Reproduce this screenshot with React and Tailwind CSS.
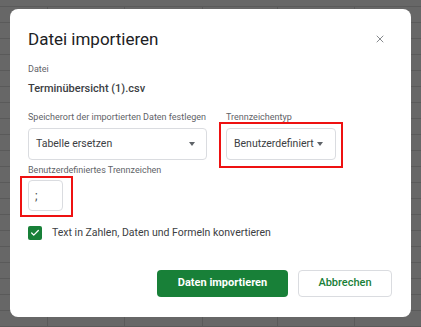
import { Check, X } from "lucide-react";

const cols = [48, 77, 78, 75, 77, 77];

function SheetBackdrop() {
    const rows = Array.from({ length: 21 });
    return (
        <div className="flex flex-col w-full h-full">
            <div className="h-[7px] border-b border-[#5a5a5a] shrink-0" />
            {rows.map((_, i) => (
                <div key={i} className="flex h-[16px] shrink-0 border-b border-[#5a5a5a]">
                    {cols.map((w, j) => (
                        <div key={j} style={{ width: w }} className="shrink-0 border-r border-[#5a5a5a]" />
                    ))}
                </div>
            ))}
        </div>
    );
}

function Select({ label, className }) {
    return (
        <div className={"h-[32px] flex items-center border border-[#dadce0] rounded-[4px] pl-[7px] pr-[11px] " + className}>
            <span className="flex-1 whitespace-nowrap text-[10.5px] text-[#3c4043]">{label}</span>
            <span className="w-0 h-0 border-l-[3.5px] border-r-[3.5px] border-t-[4px] border-l-transparent border-r-transparent border-t-[#5f6368]" />
        </div>
    );
}

export default function App() {
    return (
        <div className="relative w-[421px] h-[327px] overflow-hidden bg-[#676767] font-['Roboto',sans-serif]">
            <SheetBackdrop />

            <div className="absolute left-[10px] top-[9px] w-[401px] h-[308px] bg-white rounded-[8px] pt-[18px] pl-[18px] pr-[19px]">
                <div className="flex items-center justify-between h-[24px]">
                    <h1 className="text-[17px] text-[#202124] leading-[24px]">Datei importieren</h1>
                    <X className="w-[12px] h-[12px] text-[#5f6368] mr-[6px]" strokeWidth={1.5} />
                </div>

                <p className="mt-[12px] text-[9px] text-[#5f6368] leading-[12px]">Datei</p>
                <p className="mt-[7px] text-[11px] font-medium text-[#3c4043] leading-[14px]">Terminübersicht (1).csv</p>

                <div className="mt-[15px] flex gap-[19px]">
                    <div className="w-[179px]">
                        <p className="text-[9px] text-[#5f6368] leading-[12px]">Speicherort der importierten Daten festlegen</p>
                        <Select label="Tabelle ersetzen" className="mt-[5px]" />
                    </div>
                    <div>
                        <p className="text-[9px] text-[#5f6368] leading-[12px]">Trennzeichentyp</p>
                        <div className="relative mt-[5px]">
                            <Select label="Benutzerdefiniert" className="w-[110px] h-[31px] pl-[6px] pr-[12px]" />
                            <div className="absolute -left-[7px] -top-[6px] -right-[7px] -bottom-[8px] border-2 border-[#ee1111]" />
                        </div>
                    </div>
                </div>

                <p className="mt-[4px] text-[9px] text-[#5f6368] leading-[12px]">Benutzerdefiniertes Trennzeichen</p>
                <div className="relative mt-[4px] w-[35px]">
                    <div className="h-[31px] border border-[#dadce0] rounded-[4px] pl-[6px] flex items-center text-[12px] text-[#3c4043]">;</div>
                    <div className="absolute -left-[8px] -top-[4px] -right-[10px] -bottom-[6px] border-2 border-[#ee1111]" />
                </div>

                <label className="mt-[14px] flex items-center gap-[10px]">
                    <span className="w-[14px] h-[14px] rounded-[2px] bg-[#188038] flex items-center justify-center">
                        <Check className="w-[10px] h-[10px] text-white" strokeWidth={3} />
                    </span>
                    <span className="text-[10.5px] text-[#3c4043]">Text in Zahlen, Daten und Formeln konvertieren</span>
                </label>

                <div className="mt-[29px] flex justify-end gap-[10px]">
                    <button className="w-[131px] h-[27px] rounded-[4px] bg-[#188038] text-white text-[11px] font-bold">
                        Daten importieren
                    </button>
                    <button className="w-[94px] h-[27px] rounded-[4px] border border-[#dadce0] text-[#188038] text-[11px] font-medium">
                        Abbrechen
                    </button>
                </div>
            </div>
        </div>
    );
}
